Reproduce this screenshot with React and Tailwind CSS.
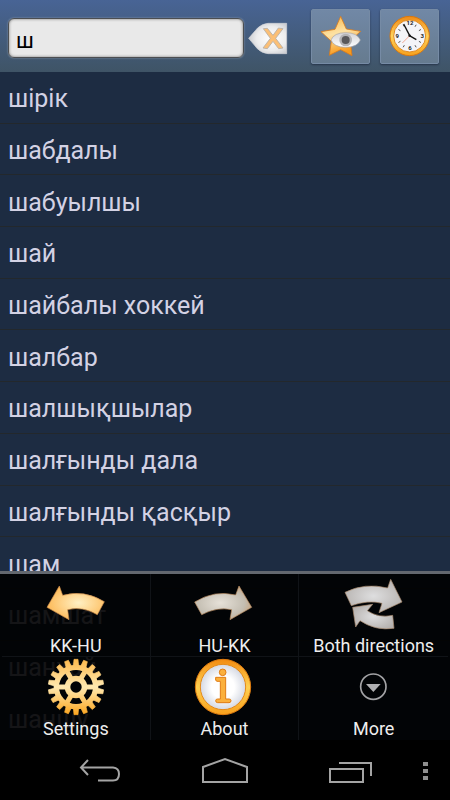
import React from "react";

const words = [
  "шірік",
  "шабдалы",
  "шабуылшы",
  "шай",
  "шайбалы хоккей",
  "шалбар",
  "шалшықшылар",
  "шалғынды дала",
  "шалғынды қасқыр",
  "шам",
  "шамшат",
  "шанхай",
  "шаншу",
];

function ClearIcon() {
  return (
    <svg viewBox="24 60 120 105" className="h-[35px] w-10" aria-hidden="true">
      <defs>
        <radialGradient id="tag" cx="0.6" cy="0.5" r="0.65">
          <stop offset="0" stopColor="#ffffff" />
          <stop offset="0.6" stopColor="#ececed" />
          <stop offset="1" stopColor="#c3c5ca" />
        </radialGradient>
      </defs>
      <path d="M26 112L52 82Q66 68 84 67H140V158H84Q66 157 52 143Z" fill="url(#tag)" stroke="#d3d5d9" strokeWidth="2" />
      <path d="M70 83L82 82L99 103L115 81L129 83L107 112L129 141L116 143L99 121L82 143L69 141L91 112Z" fill="#fbbf76" stroke="#b5afa8" strokeWidth="2.5" />
    </svg>
  );
}

function StarIcon() {
  return (
    <svg viewBox="238 42 126 126" className="h-[42px] w-[42px]" aria-hidden="true">
      <defs>
        <linearGradient id="star" x1="0" y1="0" x2="0.3" y2="1">
          <stop offset="0" stopColor="#fbb23d" />
          <stop offset="0.5" stopColor="#fde2a4" />
          <stop offset="1" stopColor="#f89a1c" />
        </linearGradient>
        <linearGradient id="eye" x1="0" y1="0" x2="0" y2="1">
          <stop offset="0" stopColor="#d3d3d7" />
          <stop offset="1" stopColor="#ffffff" />
        </linearGradient>
      </defs>
      <path d="M300 46L317 84L360 91L329 119L334 164L300 146L266 163L272 121L241 92L283 85Z" fill="url(#star)" stroke="#d97b1c" strokeWidth="2.5" strokeLinejoin="round" />
      <path d="M271 117Q280 95 315 95Q350 95 359 117Q350 139 315 139Q280 139 271 117Z" fill="url(#eye)" stroke="#a5a5aa" strokeWidth="2" />
      <circle cx="315" cy="117" r="19" fill="#b4b4b6" />
      <circle cx="315" cy="117" r="12" fill="#59595b" />
    </svg>
  );
}

const ticks = [30, 60, 120, 150, 210, 240, 300, 330];

function ClockIcon() {
  return (
    <svg viewBox="445 42 126 126" className="h-[42px] w-[42px]" aria-hidden="true">
      <defs>
        <linearGradient id="rim" x1="0" y1="0" x2="0" y2="1">
          <stop offset="0" stopColor="#ef8a16" />
          <stop offset="0.5" stopColor="#ffd25a" />
          <stop offset="1" stopColor="#f5a01c" />
        </linearGradient>
      </defs>
      <circle cx="507" cy="105" r="59" fill="url(#rim)" stroke="#d9780f" strokeWidth="3" />
      <circle cx="507" cy="105" r="48" fill="#f4f4f8" stroke="#e18a20" strokeWidth="3" />
      {ticks.map((a) => (
        <path key={a} d="M507 66V73" stroke="#444" strokeWidth="2.5" transform={`rotate(${a} 507 105)`} />
      ))}
      <g fontFamily="Roboto, sans-serif" fontWeight="700" fontSize="18" fill="#222" textAnchor="middle">
        <text x="508" y="73">12</text>
        <text x="545" y="110">3</text>
        <text x="508" y="148">6</text>
        <text x="470" y="110">9</text>
      </g>
      <path d="M507 104L485 126" stroke="#f08060" strokeWidth="2" />
      <path d="M507 104L489 69" stroke="#111" strokeWidth="4" />
      <path d="M505 103L527 116" stroke="#111" strokeWidth="4" />
      <circle cx="507" cy="104" r="3.5" fill="#111" />
    </svg>
  );
}

const iconBox = "h-[60px] w-[60px] shrink-0";

function ArrowLeftIcon() {
  return (
    <svg viewBox="138 102 180 180" className={iconBox} aria-hidden="true">
      <defs>
        <radialGradient id="gold" cx="0.55" cy="0.5" r="0.6">
          <stop offset="0" stopColor="#fff0c4" />
          <stop offset="1" stopColor="#fdb650" />
        </radialGradient>
      </defs>
      <path d="M141 202L178 138L188 166Q252 148 313 185L292 224Q248 198 203 209L207 239Z" fill="url(#gold)" stroke="#c9894a" strokeWidth="2" />
    </svg>
  );
}

function ArrowRightIcon() {
  return (
    <svg viewBox="135 102 180 180" className={iconBox} aria-hidden="true">
      <defs>
        <radialGradient id="silver" cx="0.45" cy="0.5" r="0.65">
          <stop offset="0" stopColor="#e6e1d8" />
          <stop offset="0.65" stopColor="#c4beb2" />
          <stop offset="1" stopColor="#c79a6c" />
        </radialGradient>
      </defs>
      <path d="M137 186Q196 149 260 165L270 138L308 202L243 239L248 209Q204 200 158 224Z" fill="url(#silver)" stroke="#b98d60" strokeWidth="2" />
    </svg>
  );
}

function BothIcon() {
  return (
    <svg viewBox="132 42 180 180" className={iconBox} aria-hidden="true">
      <defs>
        <radialGradient id="steel" cx="0.5" cy="0.5" r="0.6">
          <stop offset="0" stopColor="#dededf" />
          <stop offset="1" stopColor="#b4b0ad" />
        </radialGradient>
      </defs>
      <path d="M135 97Q194 67 263 84L272 58L306 126L237 158L246 130Q205 119 154 137Z" fill="url(#steel)" stroke="#a98a6c" strokeWidth="2" />
      <path d="M158 142L218 133L202 152Q236 175 278 166L282 205Q226 213 180 182L167 201Z" fill="url(#steel)" stroke="#a98a6c" strokeWidth="2" />
    </svg>
  );
}

const teeth = Array.from({ length: 18 }, (_, i) => i * 20);
const spokes = [0, 60, 120, 180, 240, 300];

function GearIcon() {
  return (
    <svg viewBox="138 51 180 180" className={iconBox} aria-hidden="true">
      <defs>
        <linearGradient id="gear" gradientUnits="userSpaceOnUse" x1="228" y1="57" x2="228" y2="225">
          <stop offset="0" stopColor="#fdb84b" />
          <stop offset="0.5" stopColor="#ffe9b0" />
          <stop offset="1" stopColor="#fba51f" />
        </linearGradient>
        <mask id="gearMask" maskUnits="userSpaceOnUse" x="138" y="51" width="180" height="180">
          <circle cx="228" cy="141" r="67" fill="#fff" />
          {teeth.map((a) => (
            <path key={a} d="M220 78L222 58H234L236 78Z" fill="#fff" stroke="#fff" strokeWidth="2" strokeLinejoin="round" transform={`rotate(${a} 228 141)`} />
          ))}
          <circle cx="228" cy="141" r="51" fill="#000" />
          <circle cx="228" cy="141" r="34" fill="#fff" />
          {spokes.map((a) => (
            <path key={a} d="M203 141H175" stroke="#fff" strokeWidth="15" transform={`rotate(${a} 228 141)`} />
          ))}
          <circle cx="228" cy="141" r="17" fill="#000" />
        </mask>
      </defs>
      <rect x="138" y="51" width="180" height="180" fill="url(#gear)" mask="url(#gearMask)" />
    </svg>
  );
}

function InfoIcon() {
  return (
    <svg viewBox="135 51 180 180" className={iconBox} aria-hidden="true">
      <defs>
        <linearGradient id="ring" x1="0" y1="0" x2="0" y2="1">
          <stop offset="0" stopColor="#f28c12" />
          <stop offset="0.5" stopColor="#ffd050" />
          <stop offset="1" stopColor="#f8a01c" />
        </linearGradient>
        <radialGradient id="disc">
          <stop offset="0.5" stopColor="#ffffff" />
          <stop offset="1" stopColor="#d5d9e3" />
        </radialGradient>
      </defs>
      <circle cx="222" cy="141" r="83" fill="url(#ring)" stroke="#dd7a0e" strokeWidth="3" />
      <circle cx="222" cy="141" r="68" fill="url(#disc)" stroke="#e58a1a" strokeWidth="3" />
      <g fill="#fbb03c" stroke="#e07c14" strokeWidth="3" strokeLinejoin="round">
        <circle cx="221" cy="97" r="10" />
        <path d="M200 112H230V177H240Q246 177 246 182Q246 188 240 188H206Q200 188 200 182Q200 177 206 177H214V124H204Q198 124 200 112Z" />
      </g>
    </svg>
  );
}

function MoreIcon() {
  return (
    <svg viewBox="132 51 180 180" className={iconBox} aria-hidden="true">
      <circle cx="220" cy="140" r="38" fill="none" stroke="#a3a3a5" strokeWidth="5" />
      <path d="M198 132H242L220 156Z" fill="#b0b0b2" />
    </svg>
  );
}

const menu = [
  { label: "KK-HU", Icon: ArrowLeftIcon },
  { label: "HU-KK", Icon: ArrowRightIcon },
  { label: "Both directions", Icon: BothIcon },
  { label: "Settings", Icon: GearIcon },
  { label: "About", Icon: InfoIcon },
  { label: "More", Icon: MoreIcon },
];

const toolButton =
  "flex h-[55px] w-[59px] shrink-0 items-center justify-center rounded-[2px] border border-[#768ba5] bg-linear-to-b from-[#7188a6] to-[#667b8f] shadow-[0_1px_2px_rgba(20,30,50,0.6)]";

export default function App() {
  return (
    <div className="flex h-screen flex-col overflow-hidden bg-black font-['Roboto','Noto_Sans',sans-serif]">
      <header className="flex h-[72px] shrink-0 items-center bg-linear-to-b from-[#486495] to-[#3f5466] pr-[11px] pl-2">
        <input
          type="text"
          aria-label="Search word"
          defaultValue="ш"
          className="mt-1 h-10 min-w-0 flex-1 rounded-md border border-[#4b4e52] bg-[#e9e9e9] px-[7px] pt-1 text-[22px] text-black shadow-[inset_0_0_3px_rgba(0,0,0,0.5),0_0_2px_rgba(190,200,210,0.6)] outline-none"
        />
        <button type="button" aria-label="Clear" className="mt-1 mr-[23px] ml-1 shrink-0">
          <ClearIcon />
        </button>
        <div className="flex gap-[10px]">
          <button type="button" aria-label="Favorites" className={toolButton}>
            <StarIcon />
          </button>
          <button type="button" aria-label="History" className={toolButton}>
            <ClockIcon />
          </button>
        </div>
      </header>

      <main className="relative min-h-0 flex-1 overflow-hidden bg-[#1d2c42]">
        <ul className="grid h-[672px] auto-rows-fr">
          {words.map((word) => (
            <li key={word} className="flex items-center border-b border-[#23282c] px-2 pt-1 text-[25px] leading-8 text-[#d3d2e4]">
              {word}
            </li>
          ))}
        </ul>

        <div className="absolute inset-x-0 bottom-0 border-t-[3px] border-[#63686f] bg-black/90 bg-clip-padding">
          <div className="grid grid-cols-3 px-[2px]">
            {menu.map(({ label, Icon }) => (
              <button
                key={label}
                type="button"
                className="flex h-[83px] flex-col items-center border-[#101317] text-[18px] leading-6 text-[#eeeeee] not-nth-[3n]:border-r nth-[-n+3]:border-b"
              >
                <Icon />
                <span>{label}</span>
              </button>
            ))}
          </div>
        </div>
      </main>

      <nav className="flex h-[60px] shrink-0 items-center bg-black pl-[37px]">
        <button type="button" aria-label="Back" className="flex flex-1 justify-center">
          <svg viewBox="0 0 44 26" className="h-[26px] w-11" fill="none" stroke="#a4a4a4" strokeWidth="2" aria-hidden="true">
            <path d="M10 3L3 10.500L10 18M3 10.500H35Q41 11 41 17Q41 23.500 35 23.500H20" />
          </svg>
        </button>
        <button type="button" aria-label="Home" className="flex flex-1 justify-center">
          <svg viewBox="0 0 46 26" className="h-[26px] w-[46px]" fill="none" stroke="#a4a4a4" strokeWidth="2" aria-hidden="true">
            <path d="M1 25V10L23 2L45 10V25Z" />
          </svg>
        </button>
        <button type="button" aria-label="Recent apps" className="flex flex-1 justify-center">
          <svg viewBox="0 0 43 26" className="h-[26px] w-[43px]" fill="none" stroke="#a4a4a4" strokeWidth="2" aria-hidden="true">
            <path d="M1 12H34V25H1ZM10 6H42V19" />
          </svg>
        </button>
        <button type="button" aria-label="Menu" className="flex w-[37px] justify-center pr-[11px]">
          <svg viewBox="0 0 6 20" className="h-5 w-[6px]" fill="#8f8f8f" aria-hidden="true">
            <path d="M0 2H5V6H0ZM0 9H5V13H0ZM0 16H5V20H0Z" />
          </svg>
        </button>
      </nav>
    </div>
  );
}
